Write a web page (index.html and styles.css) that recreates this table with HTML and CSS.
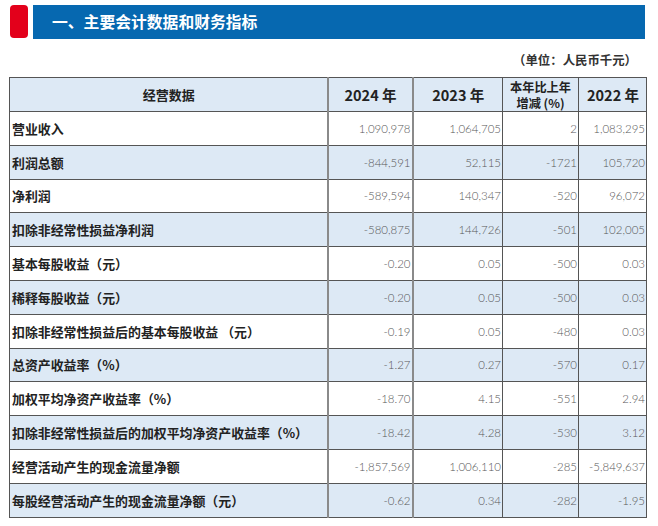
FILE: index.html
```html
<!DOCTYPE html>
<html lang="zh">
<head>
<meta charset="utf-8">
<link rel="stylesheet" href="styles.css">
</head>
<body>
<div class="page">
  <div class="banner">
    <div class="tab"></div>
    <div class="bar"><h1 class="title">一、主要会计数据和财务指标</h1></div>
  </div>
  <div class="unit">（单位：人民币千元）</div>
  <table class="data">
    <colgroup>
      <col class="c1"><col class="c2"><col class="c3"><col class="c4"><col class="c5">
    </colgroup>
    <thead>
      <tr>
        <th class="hlabel">经营数据</th>
        <th>2024 年</th>
        <th>2023 年</th>
        <th class="small"><span class="line">本年比上年</span><span class="line">增减 (%)</span></th>
        <th>2022 年</th>
      </tr>
    </thead>
    <tbody>
      <tr><td>营业收入</td><td>1,090,978</td><td>1,064,705</td><td>2</td><td>1,083,295</td></tr>
      <tr><td>利润总额</td><td>-844,591</td><td>52,115</td><td>-1721</td><td>105,720</td></tr>
      <tr><td>净利润</td><td>-589,594</td><td>140,347</td><td>-520</td><td>96,072</td></tr>
      <tr><td>扣除非经常性损益净利润</td><td>-580,875</td><td>144,726</td><td>-501</td><td>102,005</td></tr>
      <tr><td>基本每股收益（元）</td><td>-0.20</td><td>0.05</td><td>-500</td><td>0.03</td></tr>
      <tr><td>稀释每股收益（元）</td><td>-0.20</td><td>0.05</td><td>-500</td><td>0.03</td></tr>
      <tr><td>扣除非经常性损益后的基本每股收益 （元）</td><td>-0.19</td><td>0.05</td><td>-480</td><td>0.03</td></tr>
      <tr><td>总资产收益率（%）</td><td>-1.27</td><td>0.27</td><td>-570</td><td>0.17</td></tr>
      <tr><td>加权平均净资产收益率（%）</td><td>-18.70</td><td>4.15</td><td>-551</td><td>2.94</td></tr>
      <tr><td>扣除非经常性损益后的加权平均净资产收益率（%）</td><td>-18.42</td><td>4.28</td><td>-530</td><td>3.12</td></tr>
      <tr><td>经营活动产生的现金流量净额</td><td>-1,857,569</td><td>1,006,110</td><td>-285</td><td>-5,849,637</td></tr>
      <tr><td>每股经营活动产生的现金流量净额（元）</td><td>-0.62</td><td>0.34</td><td>-282</td><td>-1.95</td></tr>
    </tbody>
  </table>
</div>
</body>
</html>
```

FILE: styles.css
```css
html, body {
  margin: 0;
  padding: 0;
  background: #ffffff;
}

.page {
  width: 658px;
  height: 526px;
  overflow: hidden;
  font-family: "Noto Sans CJK SC", "Noto Sans", sans-serif;
}

.banner {
  display: flex;
  padding: 5px 13px 0 10px;
  gap: 5px;
  height: 34px;
}

.tab {
  width: 18px;
  height: 33px;
  background: #e3001b;
  border-radius: 4px;
}

.bar {
  flex: 1;
  background: #0668b0;
  display: flex;
  align-items: center;
  padding-left: 19px;
}

.title {
  margin: 0;
  color: #ffffff;
  font-size: 15.8px;
  font-weight: 700;
  line-height: 1;
}

.unit {
  text-align: right;
  padding-right: 21px;
  margin-top: 12px;
  height: 26px;
  font-size: 12.4px;
  font-weight: 700;
  color: #333333;
  line-height: 18px;
}

.data {
  margin-left: 9px;
  width: 637px;
  border-collapse: collapse;
  table-layout: fixed;
}

.c1 { width: 318px; }
.c2 { width: 85px; }
.c3 { width: 90px; }
.c4 { width: 76px; }
.c5 { width: 68px; }

.data th,
.data td {
  height: 33.8px;
  padding: 0 1px 0 2px;
  border: 1px solid #555555;
  box-sizing: border-box;
}

.data th {
  height: 34px;
  background: #dde9f5;
  font-size: 14.5px;
  font-weight: 700;
  color: #222222;
  text-align: center;
  line-height: 16px;
}

.data th.hlabel {
  font-size: 13px;
}

.data th.small {
  font-size: 12.2px;
  line-height: 16px;
  padding: 0;
}

.line {
  display: block;
  height: 16px;
}

.data td {
  font-family: "Lato", "Open Sans", sans-serif;
  font-weight: 300;
  font-size: 11.5px;
  color: #585858;
  text-align: right;
}

.data td:first-child {
  font-family: "Noto Sans CJK SC", "Noto Sans", sans-serif;
  font-weight: 700;
  font-size: 12.9px;
  color: #222222;
  text-align: left;
}

.data tr > :nth-child(1),
.data tr > :nth-child(2) {
  border-right: 2px solid #8a8a8a;
}

.data tbody tr:nth-child(even) td {
  background: #dde9f5;
}
```
